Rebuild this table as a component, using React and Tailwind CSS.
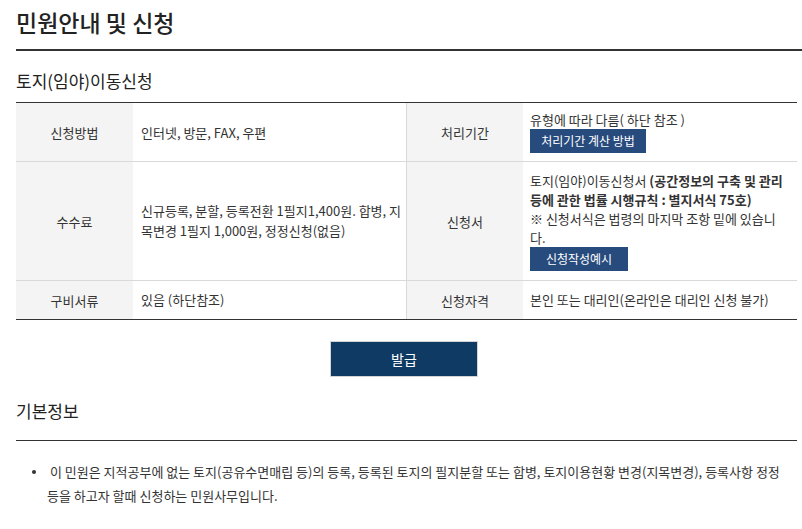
import React from "react";

const Label = ({ children, className = "" }) => (
  <div className={`bg-[#f4f4f4] flex items-center justify-center text-[#333] ${className}`}>
    {children}
  </div>
);

const BlueBtn = ({ children, className = "" }) => (
  <div className={`inline-flex h-[24px] items-center justify-center bg-[#284b7e] text-[12px] text-white leading-none ${className}`}>
    {children}
  </div>
);

export default function App() {
  return (
    <div className="min-h-[529px] bg-white pl-4 font-['Noto_Sans_CJK_KR',sans-serif] text-[13px] text-[#333]">
      {/* page title */}
      <h1 className="border-b-2 border-[#333] pt-2 pb-[13px] text-[23px] font-medium leading-[28px] text-[#222]">
        민원안내 및 신청
      </h1>

      <div className="mr-[5px]">
        <h2 className="mt-[18px] pb-[9px] text-[17px] leading-[24px] text-[#222]">토지(임야)이동신청</h2>

        {/* info table */}
        <div className="border-t border-[#333] border-b border-b-[#333] leading-[19px]">
          <div className="grid grid-cols-[117px_273px_117px_274px] border-b border-[#d9d9d9]">
            <Label>신청방법</Label>
            <div className="flex items-center px-2">인터넷, 방문, FAX, 우편</div>
            <Label className="border-l border-[#d9d9d9]">처리기간</Label>
            <div className="px-[7px] pt-[7px] pb-2">
              <div>유형에 따라 다름( 하단 참조 )</div>
              <BlueBtn className="w-[116px]">처리기간 계산 방법</BlueBtn>
            </div>
          </div>

          <div className="grid grid-cols-[117px_273px_117px_274px] border-b border-[#d9d9d9]">
            <Label>수수료</Label>
            <div className="flex items-center px-2 leading-[20px] whitespace-nowrap">
              <div>
                신규등록, 분할, 등록전환 1필지1,400원. 합병, 지
                <br />
                목변경 1필지 1,000원, 정정신청(없음)
              </div>
            </div>
            <Label className="border-l border-[#d9d9d9]">신청서</Label>
            <div className="px-[7px] pt-[9px] pb-[9px] whitespace-nowrap">
              <div>
                토지(임야)이동신청서 <b>(공간정보의 구축 및 관리</b>
              </div>
              <div className="font-bold">등에 관한 법률 시행규칙 : 별지서식 75호)</div>
              <div>※ 신청서식은 법령의 마지막 조항 밑에 있습니</div>
              <div>다.</div>
              <BlueBtn className="w-[98px]">신청작성예시</BlueBtn>
            </div>
          </div>

          <div className="grid grid-cols-[117px_273px_117px_274px]">
            <Label>구비서류</Label>
            <div className="flex items-center px-2 py-[9px] leading-[20px]">있음 (하단참조)</div>
            <Label className="border-l border-[#d9d9d9]">신청자격</Label>
            <div className="flex items-center px-[7px] py-[9px] leading-[20px]">
              본인 또는 대리인(온라인은 대리인 신청 불가)
            </div>
          </div>
        </div>

        <div className="mt-[21px] flex justify-center pr-[5px]">
          <button className="h-[36px] w-[148px] border border-[#d4d4d4] bg-[#0f3a63] text-[14px] text-white">
            발급
          </button>
        </div>

        <h2 className="mt-[22px] border-b border-[#333] pb-[17px] text-[17px] leading-[24px] text-[#222]">
          기본정보
        </h2>

        <div className="mt-[19px] flex leading-[24px]">
          <div className="flex w-[31px] shrink-0 justify-end pt-[10px] pr-[11px]">
            <span className="h-[4px] w-[4px] rounded-full bg-[#333]" />
          </div>
          <div className="whitespace-nowrap">
            &nbsp;이 민원은 지적공부에 없는 토지(공유수면매립 등)의 등록, 등록된 토지의 필지분할 또는 합병, 토지이용현황 변경(지목변경), 등록사항 정정
            <br />
            등을 하고자 할때 신청하는 민원사무입니다.
          </div>
        </div>
      </div>
    </div>
  );
}
